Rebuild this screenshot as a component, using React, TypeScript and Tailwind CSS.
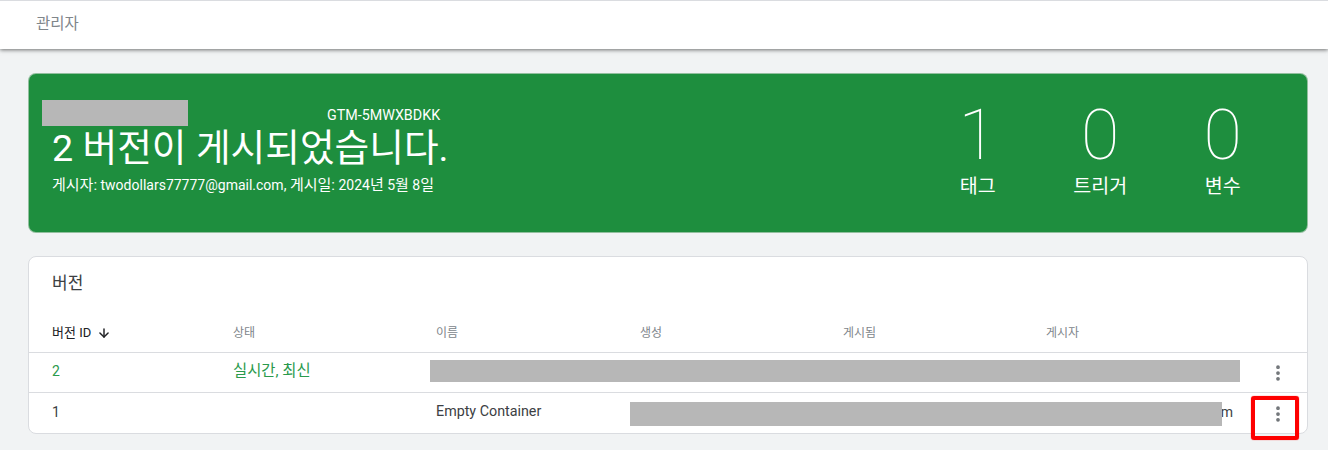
import { ArrowDown, MoreVertical } from 'lucide-react';

const stats = [
  { value: '1', label: '태그' },
  { value: '0', label: '트리거' },
  { value: '0', label: '변수' }
];

const columns = ['상태', '이름', '생성', '게시됨', '게시자'];

const rowGrid = 'grid grid-cols-[181px_203px_204px_203px_203px_1fr_58px] pl-[23px]';

function RowMenu() {
  return (
    <div className="flex items-center justify-center mt-1 text-[#6f7377]">
      <MoreVertical className="w-5 h-5" strokeWidth={2.5} />
    </div>
  );
}

export default function App() {
  return (
    <div className="relative w-[1328px] h-[450px] overflow-hidden bg-[#f1f3f4] font-['Roboto','Noto_Sans_CJK_KR',sans-serif]">
      <header className="h-[49px] bg-white border-t border-[#dadce0] flex items-center pl-9 shadow-[0_1px_4px_rgba(0,0,0,0.55)]">
        <span className="text-[15.5px] text-[#80868b]">관리자</span>
      </header>

      <main className="pl-7 pr-5 pt-6">
        {/* Published banner */}
        <section className="h-40 rounded-lg bg-[#1e8e3e] text-white flex justify-between pl-[23px] border border-[#e0e0e0]/60">
          <div className="pt-[31px]">
            <div className="text-[14.3px] leading-5 pl-[275px]">GTM-5MWXBDKK</div>
            <h1 className="text-[37.7px] leading-10 mt-[3px]">2 버전이 게시되었습니다.</h1>
            <p className="text-sm leading-5 mt-[7px]">
              <span className="text-[15px]">게시자:</span> twodollars77777@gmail.com, <span className="text-[15px]">게시일:</span> 2024<span className="text-[15px]">년</span> 5<span className="text-[15px]">월</span> 8<span className="text-[15px]">일</span>
            </p>
          </div>
          <div className="flex pr-[23px] pt-[21px]">
            {stats.map((stat, index) => (
              <div key={index} className="w-[122.5px] flex flex-col items-center">
                <div className="text-[70px] font-thin leading-[80px]">{stat.value}</div>
                <div className="text-[19.5px] leading-6">{stat.label}</div>
              </div>
            ))}
          </div>
        </section>

        {/* Versions table */}
        <section className="mt-[23px] h-[178px] rounded-lg bg-white border border-[#dadce0]">
          <h2 className="text-[17px] leading-6 text-[#3c4043] pl-[23px] pt-[14px]">버전</h2>
          <div className={`${rowGrid} h-[43px] mt-[15px] pt-1 items-center text-xs text-[#80868b] border-b border-[#dadce0]`}>
            <div className="flex items-center gap-[6px] text-[13px] text-[#202124]">
              버전 ID
              <ArrowDown className="w-[14px] h-[14px]" strokeWidth={2.5} />
            </div>
            {columns.map((column) => (
              <div key={column}>{column}</div>
            ))}
          </div>
          <div className={`${rowGrid} h-10 pb-1 items-center text-sm text-[#2a9a4c] border-b border-[#dadce0]`}>
            <div>2</div>
            <div className="text-[15.4px]">실시간, 최신</div>
            <div />
            <div />
            <div />
            <div />
            <RowMenu />
          </div>
          <div className={`${rowGrid} h-[41px] pb-1 items-center text-sm text-[#3c4043]`}>
            <div>1</div>
            <div />
            <div className="text-[14.3px]">Empty Container</div>
            <div />
            <div />
            <div className="text-right pr-4">m</div>
            <RowMenu />
          </div>
        </section>
      </main>

      {/* Redactions and highlight painted over the screenshot */}
      <div className="absolute left-[42px] top-[100px] w-[146px] h-[26px] bg-[#b7b7b7]" />
      <div className="absolute left-[430px] top-[360px] w-[810px] h-[22px] bg-[#b7b7b7]" />
      <div className="absolute left-[630px] top-[402px] w-[592px] h-6 bg-[#b7b7b7]" />
      <div className="absolute left-[1251px] top-[396px] w-[48px] h-[44px] border-[4px] border-[#fe0000] rounded-[3px] shadow-[0_0_1px_#fe0000]" />
    </div>
  );
}
